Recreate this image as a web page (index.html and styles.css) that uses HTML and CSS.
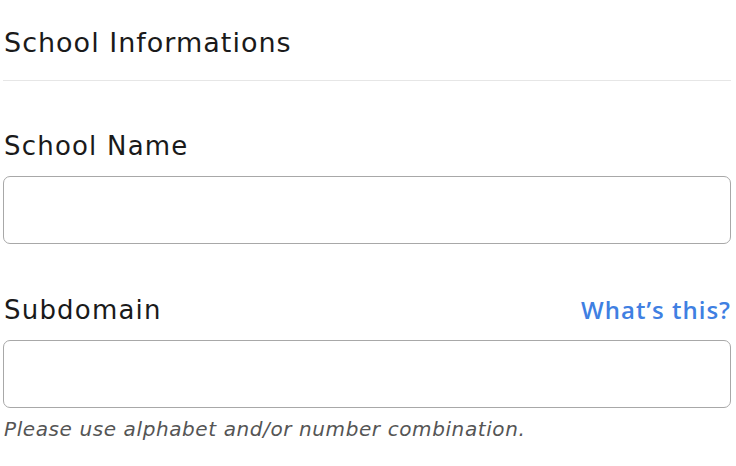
FILE: index.html
```html
<!DOCTYPE html>
<html>
<head>
<meta charset="utf-8">
<link rel="stylesheet" href="styles.css">
</head>
<body>
<div class="form">
  <div class="section-title">School Informations</div>
  <div class="divider"></div>
  <div class="field field-first">
    <div class="label-row"><label class="label">School Name</label></div>
    <input class="input" type="text">
  </div>
  <div class="field field-second">
    <div class="label-row"><label class="label">Subdomain</label><a class="help-link">What’s this?</a></div>
    <input class="input" type="text">
    <div class="hint">Please use alphabet and/or number combination.</div>
  </div>
</div>
</body>
</html>
```
FILE: styles.css
```css
html, body {
  margin: 0;
  padding: 0;
  background: #ffffff;
}
body {
  font-family: "DejaVu Sans", "Open Sans", sans-serif;
  color: #1a1a1a;
}
.form {
  width: 728px;
  padding: 0 0 0 3px;
}
.section-title {
  font-size: 27px;
  letter-spacing: 1px;
  line-height: 34px;
  padding: 26px 0 0 1px;
  height: 34px;
}
.divider {
  height: 1px;
  background: #e6e6e6;
  margin-top: 20px;
}
.label-row {
  display: flex;
  justify-content: space-between;
  align-items: baseline;
  padding-left: 1px;
}
.label {
  font-size: 26px;
  letter-spacing: 1.2px;
  line-height: 34px;
}
.help-link {
  font-family: "Open Sans", "DejaVu Sans", sans-serif;
  font-size: 24px;
  letter-spacing: 1px;
  line-height: 34px;
  color: #3f80e2;
  font-weight: 600;
}
.field-first {
  margin-top: 48px;
}
.field-second {
  margin-top: 49px;
}
.input {
  display: block;
  box-sizing: border-box;
  width: 728px;
  height: 68px;
  margin: 13px 0 0 0;
  border: 1px solid #a8a8a8;
  border-radius: 7px;
  background: #fff;
  outline: none;
}
.hint {
  font-size: 20px;
  letter-spacing: 0.6px;
  font-style: italic;
  color: #555555;
  line-height: 26px;
  margin-top: 8px;
  padding-left: 1px;
}
```
